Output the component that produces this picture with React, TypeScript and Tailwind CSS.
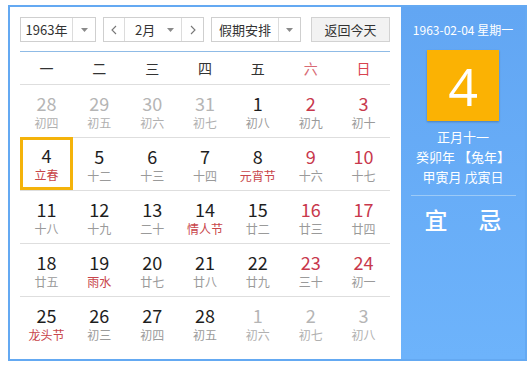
import React from "react";

type Day = { n: number; l: string; dim?: boolean; redNum?: boolean; redLunar?: boolean; sel?: boolean };

const rows: Day[][] = [
  [
    { n: 28, l: "初四", dim: true },
    { n: 29, l: "初五", dim: true },
    { n: 30, l: "初六", dim: true },
    { n: 31, l: "初七", dim: true },
    { n: 1, l: "初八" },
    { n: 2, l: "初九", redNum: true },
    { n: 3, l: "初十", redNum: true },
  ],
  [
    { n: 4, l: "立春", redLunar: true, sel: true },
    { n: 5, l: "十二" },
    { n: 6, l: "十三" },
    { n: 7, l: "十四" },
    { n: 8, l: "元宵节", redLunar: true },
    { n: 9, l: "十六", redNum: true },
    { n: 10, l: "十七", redNum: true },
  ],
  [
    { n: 11, l: "十八" },
    { n: 12, l: "十九" },
    { n: 13, l: "二十" },
    { n: 14, l: "情人节", redLunar: true },
    { n: 15, l: "廿二" },
    { n: 16, l: "廿三", redNum: true },
    { n: 17, l: "廿四", redNum: true },
  ],
  [
    { n: 18, l: "廿五" },
    { n: 19, l: "雨水", redLunar: true },
    { n: 20, l: "廿七" },
    { n: 21, l: "廿八" },
    { n: 22, l: "廿九" },
    { n: 23, l: "三十", redNum: true },
    { n: 24, l: "初一", redNum: true },
  ],
  [
    { n: 25, l: "龙头节", redLunar: true },
    { n: 26, l: "初三" },
    { n: 27, l: "初四" },
    { n: 28, l: "初五" },
    { n: 1, l: "初六", dim: true },
    { n: 2, l: "初七", dim: true },
    { n: 3, l: "初八", dim: true },
  ],
];

const weekdays = ["一", "二", "三", "四", "五", "六", "日"];

function Caret() {
  return (
    <svg width="7" height="4" viewBox="0 0 7 4">
      <path d="M0 0h7L3.5 4z" fill="#8a8a8a" />
    </svg>
  );
}

function Chevron({ dir }: { dir: "l" | "r" }) {
  return (
    <svg width="6" height="10" viewBox="0 0 6 10">
      <path
        d={dir === "l" ? "M5 1L1 5l4 4" : "M1 1l4 4-4 4"}
        fill="none"
        stroke="#777"
        strokeWidth="1.1"
      />
    </svg>
  );
}

export default function App() {
  return (
    <div
      className="w-[530px] h-[366px] bg-white pt-[5px] pl-[8px]"
      style={{ fontFamily: '"Noto Sans CJK SC", "Open Sans", sans-serif' }}
    >
      <div className="w-[519px] h-[356px] border-2 border-[#64a9f2] flex">
        {/* Left: calendar */}
        <div className="w-[391px] pl-[10px] pr-[11px] pt-[10px]">
          {/* Controls */}
          <div className="flex items-center h-[25px] text-[13px] text-[#333] leading-none">
            <div className="flex h-[25px] w-[76px] border border-[#cfcfcf]">
              <div className="w-[52px] flex items-center justify-center border-r border-[#dcdcdc]">1963年</div>
              <div className="flex-1 flex items-center justify-center">
                <Caret />
              </div>
            </div>
            <div className="flex h-[25px] w-[101px] ml-[7px] border border-[#cfcfcf]">
              <div className="w-[21px] flex items-center justify-center border-r border-[#dcdcdc]">
                <Chevron dir="l" />
              </div>
              <div className="w-[57px] flex items-center justify-between pl-[10px] pr-[7px] border-r border-[#dcdcdc]">
                <span>2月</span>
                <Caret />
              </div>
              <div className="flex-1 flex items-center justify-center">
                <Chevron dir="r" />
              </div>
            </div>
            <div className="flex h-[25px] w-[90px] ml-[7px] border border-[#cfcfcf]">
              <div className="w-[67px] flex items-center justify-center border-r border-[#dcdcdc]">假期安排</div>
              <div className="flex-1 flex items-center justify-center">
                <Caret />
              </div>
            </div>
            <div className="flex h-[25px] w-[79px] ml-[10px] border border-[#d2d2d2] bg-[#f2f2f2] items-center justify-center">
              返回今天
            </div>
          </div>

          <div className="mt-[9px] h-px bg-[#8fbbe6]" />

          {/* Weekdays */}
          <div className="grid grid-cols-7 h-[33px] border-b border-[#dedede] text-[14px] leading-none">
            {weekdays.map((w, i) => (
              <div
                key={w}
                className={
                  "flex items-center justify-center " +
                  (i === 5 ? "text-[#d86a74]" : i === 6 ? "text-[#d8434f]" : "text-[#333]")
                }
              >
                {w}
              </div>
            ))}
          </div>

          {/* Days */}
          {rows.map((row, ri) => (
            <div
              key={ri}
              className={"grid grid-cols-7 h-[53px] " + (ri < rows.length - 1 ? "border-b border-[#dedede]" : "")}
            >
              {row.map((d, ci) => (
                <div
                  key={ci}
                  className={
                    "flex flex-col items-center " +
                    (d.sel ? "border-[3px] border-[#f4b30a] pt-[5px] -mt-px h-[53px]" : "pt-[8px]")
                  }
                >
                  <span
                    className={
                      "text-[18px] leading-[20px] " +
                      (d.dim ? "text-[#b5b5b5]" : d.redNum ? "text-[#c8384c]" : "text-[#1e1e1e]")
                    }
                  >
                    {d.n}
                  </span>
                  <span
                    className={
                      "mt-[2px] text-[12px] leading-[15px] " +
                      (d.redLunar ? "text-[#c8454a]" : d.dim ? "text-[#b0b0b0]" : "text-[#9a9a9a]")
                    }
                  >
                    {d.l}
                  </span>
                </div>
              ))}
            </div>
          ))}
        </div>

        {/* Right: today panel */}
        <div className="flex-1 bg-gradient-to-b from-[#62a6f3] to-[#6db3fb] flex flex-col items-center text-white">
          <div className="mt-[15px] text-[12px] leading-[16px] whitespace-nowrap">1963-02-04 星期一</div>
          <div className="mt-[12px] w-[72px] h-[71px] bg-[#fbb203] shadow-[0_1px_2px_rgba(0,0,0,0.25)] flex items-center justify-center">
            <span className="text-[52px] leading-none" style={{ fontFamily: '"Open Sans", sans-serif' }}>
              4
            </span>
          </div>
          <div className="mt-[6px] text-[13px] leading-[20px]">正月十一</div>
          <div className="text-[13px] leading-[20px] whitespace-nowrap">癸卯年 【兔年】</div>
          <div className="text-[13px] leading-[20px] whitespace-nowrap">甲寅月 戊寅日</div>
          <div className="mt-[8px] w-[105px] h-px bg-[#9ccaf7]" />
          <div className="mt-[8px] w-[77px] flex justify-between text-[23px] leading-[30px] font-medium">
            <span>宜</span>
            <span>忌</span>
          </div>
        </div>
      </div>
    </div>
  );
}
